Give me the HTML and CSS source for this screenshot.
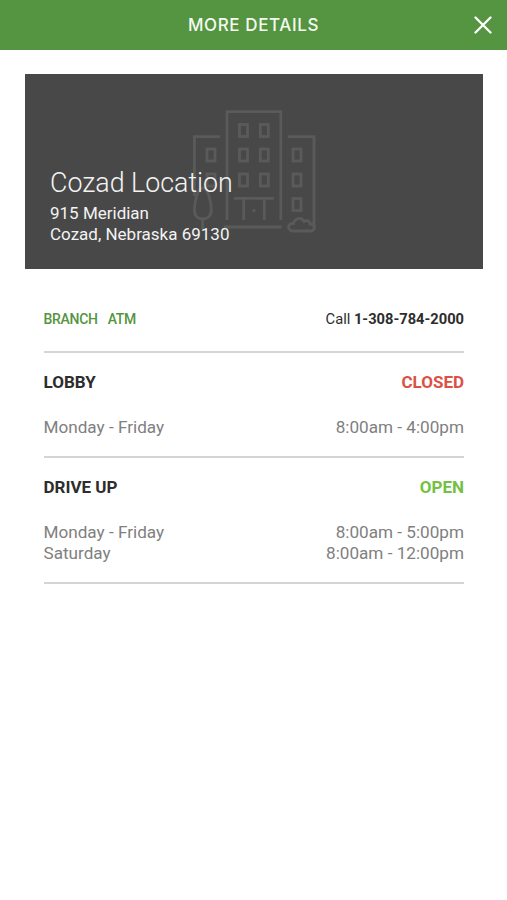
FILE: index.html
```html
<!DOCTYPE html>
<html lang="en">
<head>
    <meta charset="UTF-8">
    <meta name="viewport" content="width=device-width, initial-scale=1.0">
    <title>More Details</title>
    <link rel="stylesheet" href="styles.css">
</head>
<body>

<!-- Top bar -->
<header class="topBar">
    <h1 class="topTitle">MORE DETAILS</h1>
    <button class="closeBtn" aria-label="Close">
        <svg width="18" height="18" viewBox="0 0 18 18">
            <path d="M1.5 1.5L16.5 16.5M16.5 1.5L1.5 16.5"/>
        </svg>
    </button>
</header>

<!-- Location card -->
<section class="card">
    <svg class="building" width="128" height="128" viewBox="-2 -2 128 128">
        <!-- Towers -->
        <path d="M35 110V1.7H88.8V110"/>
        <path d="M28 26.7H2.4V86"/>
        <path d="M95.7 26.7H122V118"/>
        <!-- Windows -->
        <rect x="47.5" y="14.5" width="8" height="12"/>
        <rect x="68.3" y="14.5" width="8" height="12"/>
        <rect x="47.5" y="39" width="8" height="12"/>
        <rect x="68.3" y="39" width="8" height="12"/>
        <rect x="47.5" y="64" width="8" height="12"/>
        <rect x="68.3" y="64" width="8" height="12"/>
        <rect x="15" y="39" width="8" height="12"/>
        <rect x="15" y="64" width="8" height="12"/>
        <rect x="101" y="39" width="8" height="12"/>
        <rect x="101" y="64" width="8" height="12"/>
        <rect x="101" y="88.5" width="8" height="12"/>
        <!-- Door and ground -->
        <path d="M42 88.3H82M51.7 88.3V110M72.3 88.3V110M60.7 100.5H63.3M32 117H89.5"/>
        <!-- Tree -->
        <path d="M10.7 78C5 78 2.4 94 2.4 100C2.4 106 6 109 10.7 109S19.3 106 19.3 100C19.3 94 16.5 78 10.7 78ZM10.7 109V119"/>
        <!-- Bush -->
        <path d="M101 121C95 121 95 113 101.5 113.5C103 107.5 110 107 112 111.5C115 109.5 118 111 118 114C124 113.5 124 121 118.5 121Z"/>
    </svg>
    <div class="cardText">
        <h2 class="cardTitle">Cozad Location</h2>
        <p class="address">915 Meridian<br>Cozad, Nebraska 69130</p>
    </div>
</section>

<!-- Details -->
<main class="details">
    <div class="row contact">
        <div class="tags"><span>BRANCH</span><span>ATM</span></div>
        <div class="phone">Call <b>1-308-784-2000</b></div>
    </div>

    <section class="hours">
        <div class="row heading">
            <h3>LOBBY</h3>
            <span class="closed">CLOSED</span>
        </div>
        <div class="row time">
            <span>Monday - Friday</span>
            <span>8:00am - 4:00pm</span>
        </div>
    </section>

    <section class="hours">
        <div class="row heading">
            <h3>DRIVE UP</h3>
            <span class="open">OPEN</span>
        </div>
        <div class="row time">
            <span>Monday - Friday</span>
            <span>8:00am - 5:00pm</span>
        </div>
        <div class="row time">
            <span>Saturday</span>
            <span>8:00am - 12:00pm</span>
        </div>
    </section>
</main>

</body>
</html>
```
FILE: styles.css
```css
* {
    box-sizing: border-box;
}

body {
    margin: 0;
    background: #fff;
    color: #2d2d2d;
    font-family: Roboto, "Liberation Sans", sans-serif;
}

h1, h2, h3, p {
    margin: 0;
}

/* Top bar */
.topBar {
    display: grid;
    grid-template-columns: 48px 1fr 48px;
    align-items: center;
    height: 50px;
    background: #559440;
}

.topTitle {
    grid-column: 2;
    color: #f4faf1;
    font-family: Inter, sans-serif;
    font-size: 17px;
    font-weight: 500;
    letter-spacing: 0.6px;
    text-align: center;
}

.closeBtn {
    display: flex;
    justify-content: center;
    padding: 0;
    border: 0;
    background: none;
    cursor: pointer;
}

.closeBtn svg {
    fill: none;
    stroke: #fff;
    stroke-width: 2.3;
    stroke-linecap: round;
}

/* Location card */
.card {
    position: relative;
    height: 195px;
    margin: 24px 24px 0 25px;
    padding: 93px 25px 0;
    background: #484848;
}

/* Drawing behind the card text */
.building {
    position: absolute;
    top: 34px;
    left: 165px;
    fill: none;
    stroke: #5a5a5a;
    stroke-width: 2.8;
}

.cardText {
    position: relative;
    color: #f3f3f3;
}

.cardTitle {
    font-size: 26.8px;
    font-weight: 300;
    line-height: 32px;
}

.address {
    margin-top: 4px;
    font-size: 17px;
    line-height: 21px;
}

/* Details */
.details {
    margin: 0 43px 0 43.5px;
}

.row {
    display: flex;
    justify-content: space-between;
}

.contact {
    align-items: center;
    height: 82px;
    padding-top: 17px;
}

.tags {
    display: flex;
    gap: 10px;
    color: #559440;
    font-size: 14px;
    font-weight: 500;
    letter-spacing: -0.3px;
}

.phone {
    font-size: 14.7px;
}

.hours {
    padding: 19px 0 18px;
    border-top: 2px solid #d5d5d5;
}

.hours:last-child {
    border-bottom: 2px solid #d5d5d5;
}

.heading {
    margin-bottom: 24px;
    font-size: 17px;
    font-weight: 700;
    line-height: 21px;
}

.heading h3 {
    font-size: 17px;
    font-weight: 700;
}

.closed {
    color: #dc5146;
}

.open {
    color: #74c043;
}

.time {
    color: #808080;
    font-size: 17.15px;
    line-height: 21px;
}
```
